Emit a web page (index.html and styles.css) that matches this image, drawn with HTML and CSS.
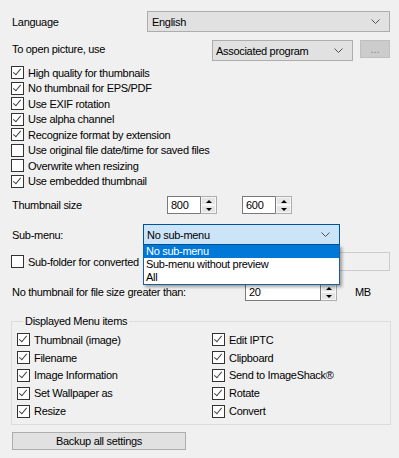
FILE: index.html
```html
<!DOCTYPE html>
<html>
<head>
  <title>Settings</title>
  <link rel="stylesheet" href="styles.css">
</head>
<body>
  <div class="panel">
    <div class="row row-lang">
      <span class="label label-lang">Language</span>
      <div class="combo combo-lang">
        <span>English</span>
        <svg class="chev" width="9" height="5" viewBox="0 0 9 5"><polyline points="0.5,0.5 4.5,4.5 8.5,0.5" fill="none" stroke="#505050"/></svg>
      </div>
    </div>

    <div class="row row-open">
      <span class="label">To open picture, use</span>
      <div class="combo combo-open">
        <span>Associated program</span>
        <svg class="chev" width="9" height="5" viewBox="0 0 9 5"><polyline points="0.5,0.5 4.5,4.5 8.5,0.5" fill="none" stroke="#505050"/></svg>
      </div>
      <button class="btn-dots" disabled>...</button>
    </div>

    <div class="checks">
      <label class="check"><span class="box on"></span>High quality for thumbnails</label>
      <label class="check"><span class="box on"></span>No thumbnail for EPS/PDF</label>
      <label class="check"><span class="box on"></span>Use EXIF rotation</label>
      <label class="check"><span class="box on"></span>Use alpha channel</label>
      <label class="check"><span class="box on"></span>Recognize format by extension</label>
      <label class="check"><span class="box"></span>Use original file date/time for saved files</label>
      <label class="check"><span class="box"></span>Overwrite when resizing</label>
      <label class="check"><span class="box on"></span>Use embedded thumbnail</label>
    </div>

    <div class="row row-thumb">
      <span class="label label-thumb">Thumbnail size</span>
      <div class="spin spin-small">
        <span class="spin-text">800</span>
        <span class="spin-btns"><span class="up"></span><span class="down"></span></span>
      </div>
      <div class="spin spin-small spin-second">
        <span class="spin-text">600</span>
        <span class="spin-btns"><span class="up"></span><span class="down"></span></span>
      </div>
    </div>

    <div class="row row-sub">
      <span class="label label-sub">Sub-menu:</span>
      <div class="combo-wrap">
        <div class="combo combo-sub">
          <span>No sub-menu</span>
          <svg class="chev" width="9" height="5" viewBox="0 0 9 5"><polyline points="0.5,0.5 4.5,4.5 8.5,0.5" fill="none" stroke="#505050"/></svg>
        </div>
        <ul class="droplist">
          <li class="sel">No sub-menu</li>
          <li>Sub-menu without preview</li>
          <li>All</li>
        </ul>
      </div>
    </div>

    <div class="row row-folder">
      <label class="check"><span class="box"></span>Sub-folder for converted</label>
      <div class="textbox-off"></div>
    </div>

    <div class="row row-size">
      <span class="label label-size">No thumbnail for file size greater than:</span>
      <div class="spin spin-wide">
        <span class="spin-text">20</span>
        <span class="spin-btns"><span class="up"></span><span class="down"></span></span>
      </div>
      <span class="unit">MB</span>
    </div>

    <fieldset class="group">
      <legend>Displayed Menu items</legend>
      <div class="group-grid">
        <label class="check"><span class="box on"></span>Thumbnail (image)</label>
        <label class="check"><span class="box on"></span>Edit IPTC</label>
        <label class="check"><span class="box on"></span>Filename</label>
        <label class="check"><span class="box on"></span>Clipboard</label>
        <label class="check"><span class="box on"></span>Image Information</label>
        <label class="check"><span class="box on"></span>Send to ImageShack&reg;</label>
        <label class="check"><span class="box on"></span>Set Wallpaper as</label>
        <label class="check"><span class="box on"></span>Rotate</label>
        <label class="check"><span class="box on"></span>Resize</label>
        <label class="check"><span class="box on"></span>Convert</label>
      </div>
    </fieldset>

    <button class="btn-backup">Backup all settings</button>
  </div>
</body>
</html>
```

FILE: styles.css
```css
body {
  margin: 0;
  background-color: #f0f0f0;
  font-family: "Liberation Sans", Arial, sans-serif;
  font-size: 11px;
  letter-spacing: -0.3px;
  color: #000;
}

.panel {
  padding: 0 9px 0 11px;
}

.row {
  display: flex;
  align-items: center;
}

.label {
  padding-left: 1px;
}

/* combo boxes */
.combo {
  display: flex;
  align-items: center;
  justify-content: space-between;
  box-sizing: border-box;
  background-color: #e1e1e1;
  border: 1px solid #adadad;
  padding: 0 9px 0 4px;
}

.chev {
  display: block;
}

.row-lang {
  margin-top: 11px;
  height: 21px;
}

.label-lang {
  width: 135px;
}

.combo-lang {
  flex: 1;
  height: 21px;
}

.row-open {
  margin-top: 8px;
  height: 20px;
  align-items: flex-start;
}

.combo-open {
  margin-left: auto;
  width: 141px;
  height: 21px;
  padding-left: 3px;
}

.row-open .label {
  margin-top: 3px;
}

.btn-dots {
  margin-left: 7px;
  width: 30px;
  height: 18px;
  background-color: #cccccc;
  border: 1px solid #bfbfbf;
  color: #838383;
  font-family: inherit;
  font-size: 11px;
  padding: 0;
  line-height: 10px;
}

/* checkboxes */
.checks {
  margin-top: 5px;
}

.check {
  display: flex;
  align-items: center;
  height: 15.5px;
  white-space: nowrap;
}

.box {
  flex: none;
  width: 13px;
  height: 13px;
  box-sizing: border-box;
  border: 1px solid #333;
  background-color: #fff;
  margin-right: 4px;
  position: relative;
}

.box.on::after {
  content: "";
  position: absolute;
  left: 3px;
  top: 0px;
  width: 3px;
  height: 7px;
  border: solid #444;
  border-width: 0 1px 1px 0;
  transform: rotate(40deg);
}

/* spin boxes */
.spin {
  display: flex;
  height: 18px;
}

.spin-text {
  flex: 1;
  box-sizing: border-box;
  background-color: #fff;
  border: 1px solid #7a7a7a;
  border-right: none;
  padding: 1px 0 0 3px;
  line-height: 15px;
}

.spin-btns {
  width: 17px;
  box-sizing: border-box;
  border: 1px solid #adadad;
  border-left: 1px solid #7a7a7a;
  display: flex;
  flex-direction: column;
  background-color: #f0f0f0;
}

.spin-btns span {
  flex: 1;
  display: flex;
  align-items: center;
  justify-content: center;
  background-color: #e5e5e5;
  border: 1px solid #f7f7f7;
}

.spin-btns .up::before {
  content: "";
  border-left: 3px solid transparent;
  border-right: 3px solid transparent;
  border-bottom: 3px solid #000;
}

.spin-btns .down::before {
  content: "";
  border-left: 3px solid transparent;
  border-right: 3px solid transparent;
  border-top: 3px solid #000;
}

.row-thumb {
  margin-top: 7px;
  height: 18px;
}

.label-thumb {
  width: 155px;
}

.spin-small {
  width: 50px;
}

.spin-second {
  margin-left: 25px;
}

/* sub-menu */
.row-sub {
  margin-top: 10px;
  height: 21px;
}

.label-sub {
  width: 131px;
}

.combo-wrap {
  position: relative;
  width: 197px;
}

.combo-sub {
  height: 21px;
  background-color: #cce4f7;
  border-color: #005499;
  padding-left: 3px;
}

.droplist {
  position: absolute;
  top: 21px;
  left: 0;
  width: 197px;
  box-sizing: border-box;
  margin: 0;
  padding: 0;
  list-style: none;
  background-color: #fff;
  border: 1px solid #1a5f9f;
  border-top: none;
  box-shadow: 2px 2px 3px rgba(0, 0, 0, 0.35);
  z-index: 2;
}

.droplist li {
  height: 13px;
  line-height: 13px;
  padding-left: 2px;
}

.droplist li.sel {
  background-color: #0078d7;
  color: #fff;
}

.row-folder {
  margin-top: 7px;
  height: 19px;
}

.textbox-off {
  margin-left: auto;
  width: 180px;
  height: 19px;
  box-sizing: border-box;
  border: 1px solid #cccccc;
  background-color: #f0f0f0;
}

.row-size {
  margin-top: 12px;
  height: 18px;
}

.label-size {
  width: 233px;
}

.spin-wide {
  width: 92px;
}

.unit {
  margin-left: 18px;
}

/* group box */
.group {
  margin: 14px 0 0 0;
  padding: 0 5px 4px 5px;
  border: 1px solid #dcdcdc;
  width: 380px;
  box-sizing: border-box;
}

.group legend {
  padding: 0 2px;
  margin-left: 6px;
  line-height: 13px;
}

.group-grid {
  display: grid;
  grid-template-columns: 195px 1fr;
  margin-top: 3px;
}

.group-grid .check {
  height: 17.8px;
}

.btn-backup {
  display: block;
  margin: 7px 0 0 1px;
  width: 174px;
  height: 18px;
  background-color: #e1e1e1;
  border: 1px solid #adadad;
  font-family: inherit;
  font-size: 11px;
  letter-spacing: -0.3px;
  padding: 0;
  color: #000;
}
```
